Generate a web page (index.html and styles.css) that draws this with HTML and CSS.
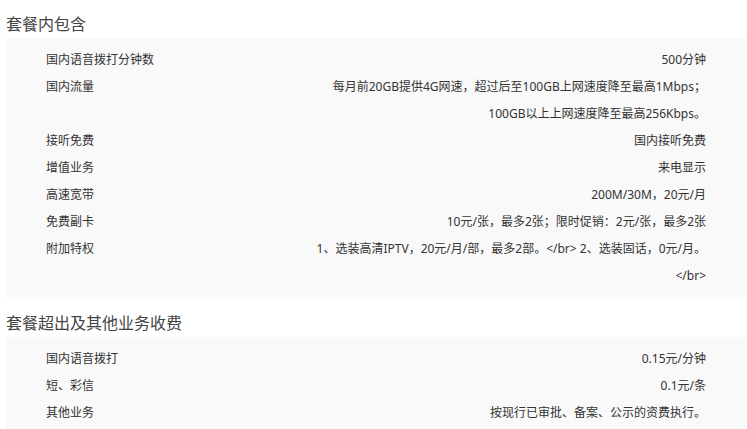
FILE: index.html
```html
<!DOCTYPE html>
<html lang="zh-CN">
<head>
  <meta charset="UTF-8"/>
  <title>套餐详情</title>
  <link rel="stylesheet" href="styles.css">
</head>
<body>

  <!-- 套餐内包含 -->
  <h3 class="sec-title">套餐内包含</h3>
  <div class="sec-box">
    <div class="row"><span class="label">国内语音拨打分钟数</span><span class="value">500分钟</span></div>
    <div class="row"><span class="label">国内流量</span><span class="value">每月前20GB提供4G网速，超过后至100GB上网速度降至最高1Mbps；<br>100GB以上上网速度降至最高256Kbps。</span></div>
    <div class="row"><span class="label">接听免费</span><span class="value">国内接听免费</span></div>
    <div class="row"><span class="label">增值业务</span><span class="value">来电显示</span></div>
    <div class="row"><span class="label">高速宽带</span><span class="value">200M/30M，20元/月</span></div>
    <div class="row"><span class="label">免费副卡</span><span class="value">10元/张，最多2张；限时促销：2元/张，最多2张</span></div>
    <div class="row"><span class="label">附加特权</span><span class="value">1、选装高清IPTV，20元/月/部，最多2部。&lt;/br&gt; 2、选装固话，0元/月。<br>&lt;/br&gt;</span></div>
  </div>

  <!-- 套餐超出及其他业务收费 -->
  <h3 class="sec-title">套餐超出及其他业务收费</h3>
  <div class="sec-box">
    <div class="row"><span class="label">国内语音拨打</span><span class="value">0.15元/分钟</span></div>
    <div class="row"><span class="label">短、彩信</span><span class="value">0.1元/条</span></div>
    <div class="row"><span class="label">其他业务</span><span class="value">按现行已审批、备案、公示的资费执行。</span></div>
  </div>

</body>
</html>
```

FILE: styles.css
```css
* { margin:0; padding:0; box-sizing:border-box }
body {
  font-family:"Noto Sans","Noto Sans CJK SC",sans-serif;
  color:#333;
  background:#fff;
  padding:0 1px 0 6px;
}

/* Section title */
.sec-title {
  font-size:16px; font-weight:400; line-height:16px;
  color:#444;
  padding:16px 0 6px;
}

/* Grey box */
.sec-box {
  background:#f9f9f9;
  padding:8px 40px;
  margin-bottom:2px;
}

/* Rows */
.row {
  display:flex; justify-content:space-between;
  font-size:12px; line-height:27px;
}
.row .label { flex:none }
.row .value { text-align:right; max-width:410px }
```
